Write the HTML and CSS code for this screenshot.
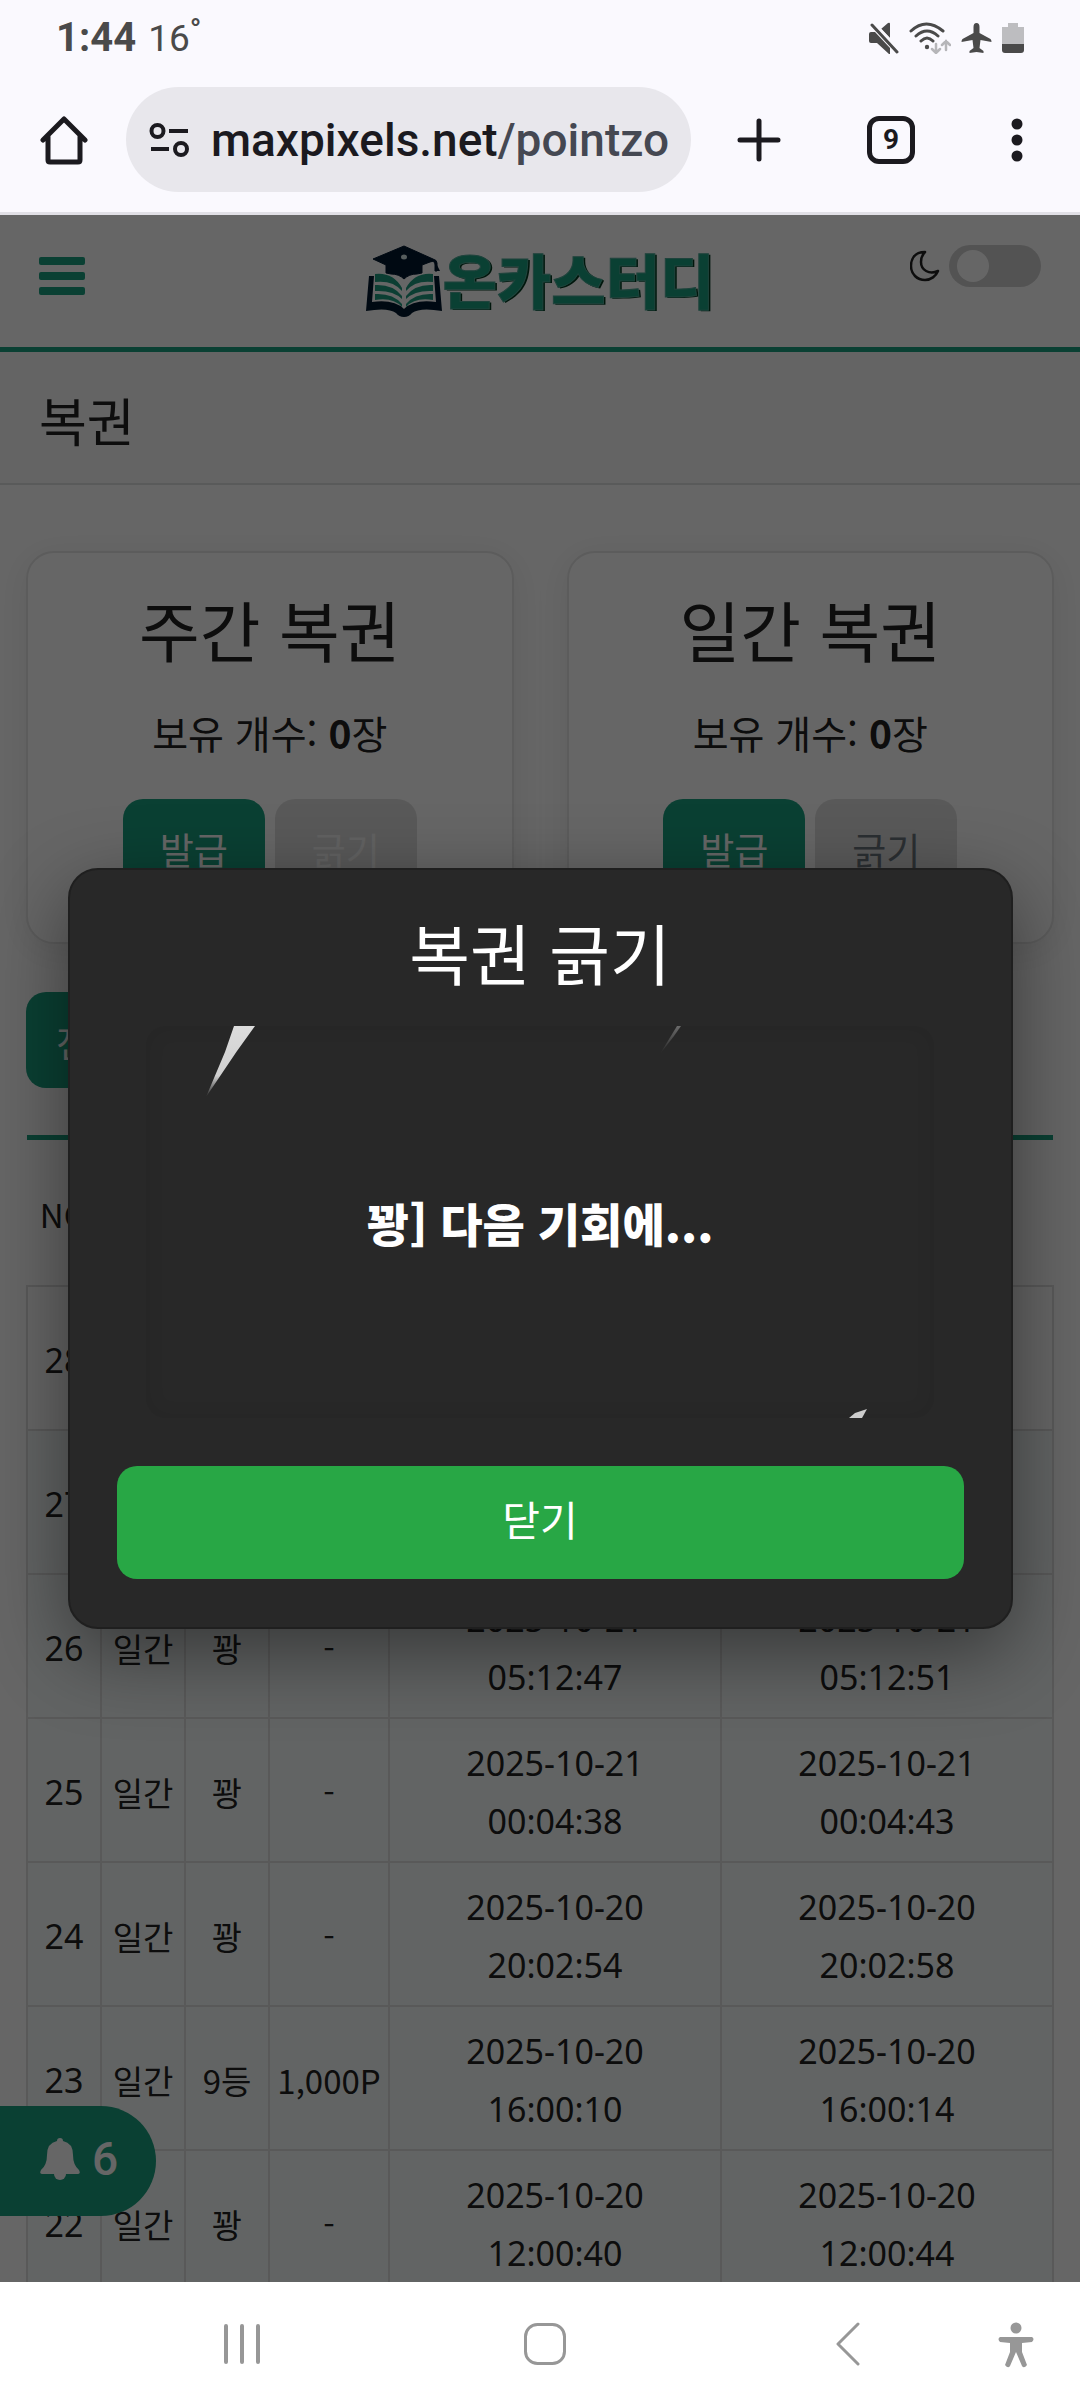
FILE: index.html
```html
<!DOCTYPE html>
<html lang="ko">
<head>
<meta charset="utf-8">
<meta name="viewport" content="width=device-width, initial-scale=1">
<title>복권</title>
<link rel="stylesheet" href="styles.css">
</head>
<body>
<div class="status">
  <div class="status-left"><span class="clock">1:44</span><span class="temp">16<sup>°</sup></span></div>
  <div class="status-icons">
    <svg width="30" height="32" viewBox="0 0 30 32"><path fill="#4a4a4a" d="M0 12q0-2 2-2h4L21 26v6h-1L8 21H2q-2 0-2-2zM12 7l7-6q2-1 2 1v14z"/><path stroke="#faf9fe" stroke-width="3" d="M5 1l25 27"/><path stroke="#4a4a4a" stroke-width="3" stroke-linecap="round" d="M3 3l25 27"/></svg>
    <svg width="42" height="32" viewBox="0 0 42 32" fill="none" stroke-linecap="round"><g stroke="#4a4a4a" stroke-width="3"><path d="M2 9q15-14 32 0M7 14q11-10 22 0M12 19q6-6 12 0"/></g><circle cx="18" cy="25" r="2.200" fill="#4a4a4a"/><g stroke="#b6b6b9" stroke-width="2.500"><path d="M27 22v9m-4-4l4 4 4-4M37 28v-9m-4 4l4-4 4 4"/></g></svg>
    <svg width="31" height="32" viewBox="0 0 31 32"><path fill="#4a4a4a" d="M15.500 1q3 0 3 4v6l11 6q1 1 1 3l-11-2-1 8 4 3v2l-7-1-7 1v-2l4-3-1-8-11 2q0-2 1-3l11-6V5q0-4 3-4z"/></svg>
    <svg width="22" height="32" viewBox="0 0 22 32"><path fill="#bdbdc0" d="M6 1h10v4h6v19H0V5h6z"/><path fill="#4a4a4a" d="M0 22h22v6q0 3-3 3H3q-3 0-3-3z"/></svg>
  </div>
</div>
<div class="toolbar">
  <button class="home-btn" aria-label="홈"><svg width="48" height="50" viewBox="0 0 48 50" fill="none" stroke="#1b1a1f" stroke-width="5" stroke-linecap="round" stroke-linejoin="round"><path d="M3 25L24 4l21 21M8 21v24q0 2 2 2h28q2 0 2-2V21"/></svg></button>
  <a class="address" href="#">
    <svg class="site-icon" width="40" height="36" viewBox="0 0 40 36" fill="none" stroke="#1b1a1f" stroke-width="4"><circle cx="8.500" cy="9" r="6"/><path d="M20 9h19M2 27h18"/><circle cx="32" cy="27" r="6"/></svg>
    <span class="url">maxpixels.net<span class="path">/pointzone</span></span>
  </a>
  <button class="tool" aria-label="새 탭"><svg width="44" height="44" viewBox="0 0 44 44" stroke="#1b1a1f" stroke-width="5" stroke-linecap="round"><path d="M22 3v38M3 22h38"/></svg></button>
  <button class="tool" aria-label="탭 목록"><span class="tabs">9</span></button>
  <button class="tool tool-menu" aria-label="메뉴"><svg width="12" height="44" viewBox="0 0 12 44" fill="#1b1a1f"><circle cx="6" cy="6" r="5.500"/><circle cx="6" cy="22" r="5.500"/><circle cx="6" cy="38" r="5.500"/></svg></button>
</div>

<div class="view">
  <div class="page">
    <header class="site-header">
      <button class="burger" aria-label="사이트 메뉴"><span></span><span></span><span></span></button>
      <a class="logo" href="#">
        <svg width="76" height="72" viewBox="0 0 76 72"><path fill="#00172e" stroke="#00172e" stroke-linejoin="round" d="M38 1L7 14l13 6v8l5 1q8 0 13 5 5-5 13-5l5-1v-8l8-3q5-2 5 3v6h2v-8q0-3-4-4z"/><path fill="#00172e" d="M70 18l4 8h-5zM3 31h5L6 57q22-3 32 7 10-10 32-7l-2-26h5l3 35q-22-4-30 2-3 4-8 4t-8-4q-8-6-30-2z"/><ellipse cx="38" cy="12" rx="3" ry="2.500" fill="#d8e8e8"/><g fill="#1f9c80"><path d="M9 29q18-2 27 14v3Q27 35 9 37zM9 40q18-1 27 11v3Q27 45 9 46zM9 49q18-1 27 10v3Q27 52 9 55z"/><path d="M67 29q-18-2-27 14v3q9-11 27-9zM67 40q-18-1-27 11v3q9-9 27-8zM67 49q-18-1-27 10v3q9-10 27-7z"/></g></svg>
        <span class="logo-text">온카스터디</span>
      </a>
      <label class="theme"><svg width="30" height="32" viewBox="0 0 30 32" fill="none" stroke="#222" stroke-width="2.500" stroke-linejoin="round"><path d="M15 2C3 2 1 11 1 16c0 8 6 14 14 14 6 0 11-4 13-9-9 4-17-1-17-9 0-4 1-7 4-10z"/></svg><input type="checkbox" class="switch" aria-label="다크 모드"></label>
    </header>
    <h1 class="page-title">복권</h1>
    <main class="content">
      <div class="cards">
        <section class="card">
          <h2>주간 복권</h2>
          <p>보유 개수: <b>0</b>장</p>
          <div class="card-actions"><button class="btn">발급</button><button class="btn btn-gray" disabled>긁기</button></div>
        </section>
        <section class="card">
          <h2>일간 복권</h2>
          <p>보유 개수: <b>0</b>장</p>
          <div class="card-actions"><button class="btn">발급</button><button class="btn btn-gray dark">긁기</button></div>
        </section>
      </div>
      <button class="btn filter">전체</button>
      <table class="history">
        <colgroup><col class="c-no"><col class="c-kind"><col class="c-rank"><col class="c-point"><col><col></colgroup>
        <thead><tr><th>NO</th><th>종류</th><th>등수</th><th>포인트</th><th>발급일</th><th>사용일</th></tr></thead>
        <tbody>
          <tr><td class="num">28</td><td>일간</td><td>꽝</td><td>-</td><td class="num">2025-10-21 13:20:11</td><td class="num">2025-10-21 13:20:15</td></tr>
          <tr><td class="num">27</td><td>일간</td><td>꽝</td><td>-</td><td class="num">2025-10-21 09:16:22</td><td class="num">2025-10-21 09:16:26</td></tr>
          <tr><td class="num">26</td><td>일간</td><td>꽝</td><td>-</td><td class="num">2025-10-21 05:12:47</td><td class="num">2025-10-21 05:12:51</td></tr>
          <tr><td class="num">25</td><td>일간</td><td>꽝</td><td>-</td><td class="num">2025-10-21 00:04:38</td><td class="num">2025-10-21 00:04:43</td></tr>
          <tr><td class="num">24</td><td>일간</td><td>꽝</td><td>-</td><td class="num">2025-10-20 20:02:54</td><td class="num">2025-10-20 20:02:58</td></tr>
          <tr><td class="num">23</td><td>일간</td><td>9등</td><td>1,000P</td><td class="num">2025-10-20 16:00:10</td><td class="num">2025-10-20 16:00:14</td></tr>
          <tr><td class="num">22</td><td>일간</td><td>꽝</td><td>-</td><td class="num">2025-10-20 12:00:40</td><td class="num">2025-10-20 12:00:44</td></tr>
        </tbody>
      </table>
    </main>
  </div>
  <button class="alerts" aria-label="알림 6개"><svg width="40" height="44" viewBox="0 0 40 44" fill="#fff"><path d="M20 1q3 0 3 3 10 2 10 14 0 10 6 15 2 4-1 4H2q-3 0-1-4 6-5 6-15Q7 6 17 4q0-3 3-3z"/><circle cx="20" cy="37" r="6"/></svg><span>6</span></button>
  <div class="overlay">
    <div class="modal" role="dialog" aria-modal="true" aria-labelledby="modal-title">
      <h2 id="modal-title">복권 긁기</h2>
      <div class="scratch">
        <svg class="remnants" viewBox="0 0 788 392" aria-hidden="true"><defs><linearGradient id="fade" x1="0" y1="0" x2="0" y2="1"><stop offset="0" stop-color="#dcdcdc"/><stop offset=".7" stop-color="#d0d0d0"/><stop offset="1" stop-color="#282828"/></linearGradient><linearGradient id="faint" x1="0" y1="0" x2="0" y2="1"><stop offset="0" stop-color="#6a6a6a"/><stop offset="1" stop-color="#282828"/></linearGradient></defs><path fill="url(#fade)" d="M88 0h21L91 25 60 71 79 26z"/><path fill="url(#faint)" d="M531 0h4l-7 10-14 18z"/><path fill="#ccc" d="M703 392l6-5 12-4-5 9z"/></svg>
        <span class="result">꽝] 다음 기회에...</span>
      </div>
      <button class="close">닫기</button>
    </div>
  </div>
</div>

<nav class="sysnav">
  <button class="sys" aria-label="최근 앱"><svg width="40" height="44" viewBox="0 0 40 44" stroke="#979797" stroke-width="4" stroke-linecap="round"><path d="M4 4v36M20 4v36M36 4v36"/></svg></button>
  <button class="sys" aria-label="홈 화면"><svg width="44" height="44" viewBox="0 0 44 44" fill="none" stroke="#979797" stroke-width="3"><rect x="2.500" y="2.500" width="39" height="39" rx="12"/></svg></button>
  <button class="sys" aria-label="뒤로"><svg width="26" height="44" viewBox="0 0 26 44" fill="none" stroke="#979797" stroke-width="3" stroke-linecap="round" stroke-linejoin="round"><path d="M23 2L3 22l20 20"/></svg></button>
  <button class="sys sys-access" aria-label="접근성"><svg width="38" height="46" viewBox="0 0 38 46" fill="#979797"><circle cx="19" cy="6" r="5.500"/><path d="M3 15h32q3 2 0 5l-10 1v9l5 13q-3 4-5 1l-6-14-6 14q-2 3-5-1l5-13v-9L3 20q-3-3 0-5z"/></svg></button>
</nav>
</body>
</html>
```
FILE: styles.css
```css
* { box-sizing: border-box; }

body {
  margin: 0;
  height: 100vh;
  display: flex;
  flex-direction: column;
  background: #fff;
  color: #222;
  font-family: "Noto Sans CJK KR", sans-serif;
  font-size: 33px;
}

button { font: inherit; color: inherit; border: 0; padding: 0; background: none; cursor: pointer; }
a { color: inherit; text-decoration: none; }
svg { display: block; flex: none; }

/* Phone status bar */
.status {
  display: flex;
  justify-content: space-between;
  align-items: center;
  flex: none;
  height: 75px;
  padding: 0 56px;
  background: #faf9fe;
  color: #4a4a4a;
  font-family: Roboto, sans-serif;
}
.status-left { display: flex; align-items: baseline; gap: 12px; }
.clock { font-size: 40px; font-weight: 700; }
.temp { font-size: 37px; }
.temp sup { font-size: 30px; font-weight: 700; line-height: 0; vertical-align: 11px; }
.status-icons { display: flex; align-items: center; gap: 10px; }

/* Browser toolbar */
.toolbar {
  display: flex;
  align-items: center;
  flex: none;
  height: 140px;
  padding: 12px 0 20px 40px;
  background: #faf9fe;
  border-bottom: 3px solid #e1e0e6;
  color: #1b1a1f;
  font-family: Roboto, sans-serif;
}
.home-btn { margin-right: 38px; }
.address {
  display: flex;
  align-items: center;
  flex: 1;
  min-width: 0;
  height: 105px;
  padding: 0 21px 0 23px;
  margin-right: 2px;
  gap: 22px;
  border-radius: 53px;
  background: #e8e7ec;
}
.url { flex: 1; min-width: 0; overflow: hidden; white-space: nowrap; font-size: 46px; font-weight: 500; line-height: 60px; }
.path { color: #454852; }
.tool { display: flex; align-items: center; justify-content: center; width: 132px; }
.tool-menu { width: 120px; margin-right: 3px; }
.tabs { width: 48px; height: 48px; border: 5px solid #1b1a1f; border-radius: 12px; font-size: 28px; font-weight: 700; line-height: 38px; }

/* Web page */
.view { position: relative; flex: 1; min-height: 0; overflow: hidden; }
.site-header {
  display: grid;
  grid-template-columns: 1fr auto 1fr;
  align-items: start;
  padding: 30px 39px;
  border-bottom: 5px solid #1aa080;
}
.burger { justify-self: start; display: grid; gap: 7px; padding: 12px 0; }
.burger span { width: 46px; height: 8px; border-radius: 2px; background: #1aa080; }
.logo { display: flex; align-items: center; gap: 1px; height: 72px; }
.logo-text {
  font-size: 59px;
  font-weight: 900;
  line-height: 68px;
  padding-bottom: 4px;
  color: #1aa080;
  -webkit-text-stroke: 1px #4fa896;
  text-shadow: 2px 1px 0 #003a20;
}
.theme { justify-self: end; display: flex; align-items: center; gap: 9px; }
.switch {
  appearance: none;
  display: flex;
  align-items: center;
  width: 92px;
  height: 42px;
  margin: 0;
  padding: 0 8px;
  border-radius: 21px;
  background: #d0d0d0;
}
.switch::before { content: ""; width: 32px; height: 32px; border-radius: 50%; background: #fff; }

.page-title {
  margin: 0;
  padding: 32px 39px 27px;
  border-bottom: 2px solid #dfe2e2;
  background: #fafafa;
  font-size: 52px;
  font-weight: 400;
  line-height: 72px;
}
.content { padding: 66px 26px; }
.cards { display: grid; grid-template-columns: 1fr 1fr; gap: 53px; }
.card {
  padding: 42px 24px 47px;
  border: 2px solid #e6e6e6;
  border-radius: 28px;
  background: #fff;
  box-shadow: 0 6px 34px rgba(0, 0, 0, .08);
  text-align: center;
}
.card h2, .modal h2 { margin: 0; font-size: 66px; font-weight: 400; line-height: 66px; }
.card p { margin: 42px 0 38px; font-size: 39px; line-height: 58px; }
.card-actions { display: flex; justify-content: center; gap: 10px; }
.btn {
  width: 142px;
  height: 96px;
  padding-top: 4px;
  border-radius: 20px;
  background: #1aa080;
  color: #fff;
  font-size: 37px;
}
.btn-gray { background: #dfdfdf; color: #f5f5f5; }
.btn-gray.dark { color: #6c757d; }
.filter { display: block; width: 128px; margin: 48px 0 47px; }

.history {
  width: 100%;
  table-layout: fixed;
  border-collapse: collapse;
  text-align: center;
  line-height: 58px;
  border-top: 5px solid #1aa080;
}
.c-no { width: 74px; }
.c-kind, .c-rank { width: 84px; }
.c-point { width: 120px; }
.history th { height: 148px; padding: 4px 0 0; font-weight: 400; white-space: nowrap; overflow: hidden; }
.history td { height: 144px; padding: 15px 0 11px; border: 2px solid #dedede; }
.history td.num:nth-child(n+5) { padding: 15px 60px 11px; }
.history .num { font-family: "Noto Sans", sans-serif; font-size: 34px; }
.history tbody tr:nth-child(n+2) { background: #f6fbf9; }

.alerts {
  position: absolute;
  left: 0;
  bottom: 66px;
  display: flex;
  align-items: center;
  gap: 12px;
  height: 110px;
  padding: 0 38px 4px 40px;
  border-radius: 0 55px 55px 0;
  background: #1aa080;
  color: #fff;
  font-family: Roboto, sans-serif;
  font-size: 46px;
  font-weight: 500;
}

/* Scratch dialog */
.overlay {
  position: absolute;
  inset: 0;
  display: flex;
  align-items: center;
  justify-content: center;
  background: rgba(0, 0, 0, .6);
}
.modal {
  width: 88%;
  max-width: 945px;
  padding: 48px 47px;
  border: 2px solid #1f1f1f;
  border-radius: 30px;
  background: #282828;
  box-shadow: 0 24px 80px rgba(0, 0, 0, .45);
  color: #fff;
  text-align: center;
}
.scratch {
  position: relative;
  display: grid;
  place-items: center;
  max-width: 788px;
  aspect-ratio: 788 / 392;
  margin: 42px auto 48px;
  border-radius: 20px;
  box-shadow: inset 0 0 20px rgba(0, 0, 0, .08);
}
.remnants { position: absolute; inset: 0; width: 100%; height: 100%; }
.result { font-size: 46px; font-weight: 900; line-height: 60px; }
.close {
  width: 100%;
  height: 113px;
  padding-bottom: 10px;
  border-radius: 20px;
  background: #28a745;
  font-size: 41px;
}

/* System navigation */
.sysnav { display: grid; grid-template-columns: 1fr 1fr 1fr; position: relative; align-items: center; flex: none; height: 126px; padding: 0 81px 2px 90px; background: #fff; }
.sys { display: flex; align-items: center; justify-content: center; height: 100%; }
.sys-access { position: absolute; right: 45px; top: 0; }
```
